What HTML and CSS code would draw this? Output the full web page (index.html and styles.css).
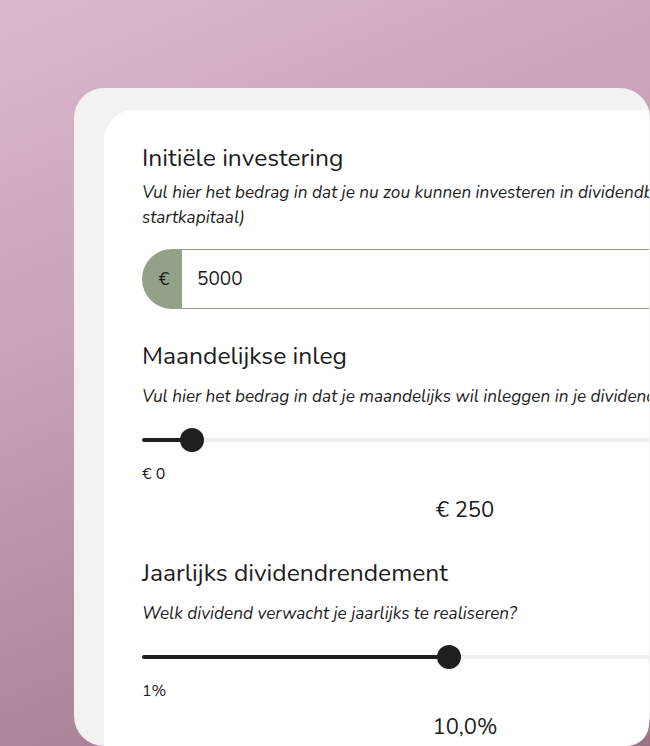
FILE: index.html
```html
<!DOCTYPE html>
<html lang="nl">
<head>
<meta charset="utf-8">
<title>Dividend calculator</title>
<link rel="stylesheet" href="styles.css">
</head>
<body>
<div class="stage">
  <div class="outer">
    <div class="card">
      <section class="field first">
        <h2 class="label">Initiële investering</h2>
        <p class="hint">Vul hier het bedrag in dat je nu zou kunnen investeren in dividendbeleggingen (je startkapitaal)</p>
        <div class="input-group">
          <span class="addon">€</span>
          <span class="input">5000</span>
        </div>
      </section>
      <section class="field">
        <h2 class="label">Maandelijkse inleg</h2>
        <p class="hint nowrap">Vul hier het bedrag in dat je maandelijks wil inleggen in je dividendportefeuille</p>
        <div class="slider">
          <div class="fill" style="width:50px"></div>
          <div class="thumb" style="left:50px"></div>
        </div>
        <div class="min">€ 0</div>
        <div class="value">€ 250</div>
      </section>
      <section class="field">
        <h2 class="label">Jaarlijks dividendrendement</h2>
        <p class="hint nowrap">Welk dividend verwacht je jaarlijks te realiseren?</p>
        <div class="slider">
          <div class="fill" style="width:307px"></div>
          <div class="thumb" style="left:307px"></div>
        </div>
        <div class="min">1%</div>
        <div class="value">10,0%</div>
      </section>
    </div>
  </div>
</div>
</body>
</html>
```

FILE: styles.css
```css
* { box-sizing: border-box; }
html, body { margin: 0; padding: 0; }
body {
  width: 650px;
  height: 746px;
  overflow: hidden;
  background: linear-gradient(158deg, #dab8cd 0%, #c5a1b6 40%, #9a7388 100%);
  font-family: "Nunito", "Lato", "Open Sans", sans-serif;
  color: #1c1c1c;
}
.stage {
  padding: 88px 0 0 74px;
}
.outer {
  width: 576px;
  height: 658px;
  background: #f2f2f2;
  border-radius: 30px;
  padding: 22px 0 0 30px;
}
.card {
  width: 545px;
  height: 636px;
  background: #ffffff;
  border-radius: 30px 0 22px 0;
  padding: 33px 0 0 38px;
  overflow: hidden;
}
.field { width: 646px; }
.label {
  margin: 0;
  font-size: 24.6px;
  line-height: 30px;
  font-weight: 400;
}
.hint {
  margin: 7px 0 0;
  font-size: 17.2px;
  line-height: 25px;
  font-style: italic;
  width: 700px;
}
.hint.nowrap { white-space: nowrap; margin-top: 13px; }
.input-group {
  margin-top: 19px;
  display: flex;
  height: 60px;
}
.addon {
  width: 40px;
  background: #93a186;
  border-radius: 30px 0 0 30px;
  display: flex;
  align-items: center;
  justify-content: center;
  font-size: 18px;
  padding-left: 4px;
}
.input {
  flex: 1;
  border-top: 1px solid #9a9a86;
  border-bottom: 1px solid #9a9a86;
  display: flex;
  align-items: center;
  padding-left: 15px;
  font-size: 19px;
}
.field + .field { margin-top: 32px; }
.field + .field + .field { margin-top: 36px; }
.slider {
  position: relative;
  margin-top: 19px;
  height: 24px;
  display: flex;
  align-items: center;
}
.slider::before {
  content: "";
  position: absolute;
  left: 0; right: 0;
  top: 10px;
  height: 4px;
  border-radius: 2px;
  background: #eeeeee;
}
.fill {
  position: relative;
  height: 4px;
  border-radius: 2px;
  background: #1f1f1f;
}
.thumb {
  position: absolute;
  top: 0;
  width: 24px;
  height: 24px;
  margin-left: -12px;
  border-radius: 50%;
  background: #1f1f1f;
}
.min {
  margin-top: 10px;
  font-size: 16px;
  line-height: 24px;
}
.value {
  margin-top: 12px;
  text-align: center;
  font-size: 22px;
  line-height: 24px;
}
```
